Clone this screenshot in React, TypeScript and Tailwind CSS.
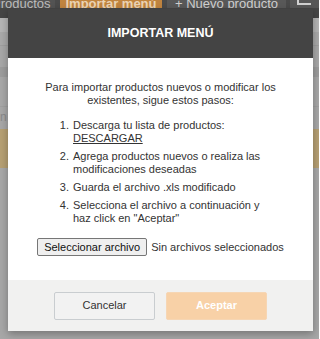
import React from 'react';

const steps: React.ReactNode[] = [
  <>
    Descarga tu lista de productos:
    <a href="#" className="block text-[#333] underline">DESCARGAR</a>
  </>,
  <>Agrega productos nuevos o realiza las modificaciones deseadas</>,
  <>Guarda el archivo .xls modificado</>,
  <>Selecciona el archivo a continuación y haz click en "Aceptar"</>,
];

const TopBar: React.FC = () => (
  <div className="flex h-[8px] overflow-hidden bg-[#4a4a4a] text-[13px] leading-[8px]">
    <div className="flex w-[55px] items-end overflow-hidden bg-[#535353] text-[#bdbdbd]">
      <span className="-ml-[8px] whitespace-nowrap">Productos</span>
    </div>
    <div className="ml-[5px] flex w-[102px] items-end justify-center bg-[#c0843f] font-bold text-[#ead3b4]">
      <span className="whitespace-nowrap">Importar menú</span>
    </div>
    <div className="ml-[5px] flex w-[119px] items-end justify-center bg-[#585858] text-[#cfcfcf]">
      <span className="whitespace-nowrap">+ Nuevo producto</span>
    </div>
    <div className="ml-[4px] flex flex-1 items-start bg-[#575757] pl-[7px]">
      <div className="h-[5px] w-[14px] border-b-2 border-l-2 border-[#d0d0d0]" />
    </div>
  </div>
);

const App: React.FC = () => {
  return (
    <div className="relative h-[339px] w-[319px] overflow-hidden bg-[#a7a7a7] font-['Liberation_Sans',Arial,sans-serif]">
      {/* dimmed page behind the dialog */}
      <TopBar />
      <div className="h-[10px] bg-[#464646]" />
      <div className="h-[14px] bg-[#b5b5b5]" />
      <div className="h-[14px] border-b border-[#9f9f9f] bg-[#aaaaaa]" />
      <div className="h-[21px] bg-[#a8a8a8]" />
      <div className="h-[10px] bg-[#9d9d9d]" />
      <div className="h-[30px] border-b border-[#a0a0a0] bg-[#a8a8a8]" />
      <div className="h-[22px] bg-[#a8a8a8] pt-[4px] text-[12px] leading-[12px] text-[#8a8a8a]">n</div>
      <div className="h-[39px] bg-[#b6a073]" />
      <div className="h-[12px] bg-[#a9a9a9]" />

      {/* dialog */}
      <div className="absolute left-[8px] top-[9px] w-[305px] shadow-[0_3px_8px_rgba(0,0,0,0.3)]">
        <div className="flex h-[49px] items-center justify-center bg-[#444444]">
          <h2 className="text-[12.5px] font-bold leading-none text-white">IMPORTAR MENÚ</h2>
        </div>

        <div className="flex h-[222px] flex-col bg-white px-[20px] pt-[23px] text-[11px] leading-[13px] text-[#333]">
          <p className="text-center">
            Para importar productos nuevos o modificar los existentes, sigue estos pasos:
          </p>
          <ol className="ml-[44px] mt-[12px] w-[196px] list-decimal space-y-[5px]">
            {steps.map((s, i) => (
              <li key={i} className="pl-[1px]">{s}</li>
            ))}
          </ol>
          <div className="mt-[13px] flex items-center justify-center gap-[4px]">
            <button className="h-[18px] rounded-[2px] border border-[#767676] bg-[#efefef] px-[6px] text-[11px] leading-none text-[#111]">
              Seleccionar archivo
            </button>
            <span className="text-[#333]">Sin archivos seleccionados</span>
          </div>
        </div>

        <div className="flex h-[51px] items-center justify-center gap-[11px] bg-[#f1f1f0]">
          <button className="h-[28px] w-[101px] rounded-[2px] border border-[#c9cdd0] bg-[#f2f2f2] text-[11px] text-[#333]">
            Cancelar
          </button>
          <button className="h-[28px] w-[101px] rounded-[2px] border border-[#f6d6b4] bg-[#f8d1a7] text-[11px] font-bold text-white">
            Aceptar
          </button>
        </div>
      </div>
    </div>
  );
};

export default App;
